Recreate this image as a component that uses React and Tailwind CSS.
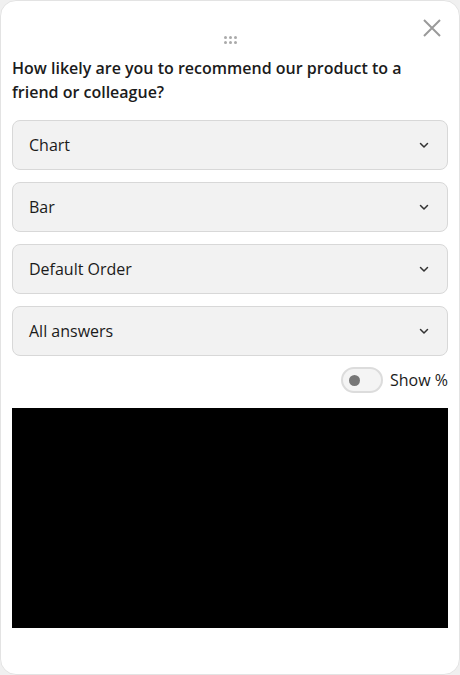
import React, { useState } from 'react';

const options = ['Chart', 'Bar', 'Default Order', 'All answers'];

const Chevron = () => (
  <svg width="12" height="12" viewBox="0 0 12 12" fill="none">
    <path d="M2.5 4.5 6 8l3.5-3.5" stroke="#333" strokeWidth="1.5" strokeLinecap="round" strokeLinejoin="round" />
  </svg>
);

const App = () => {
  const [showPct, setShowPct] = useState(false);

  return (
    <div className="h-[675px] w-[460px] bg-[#f0f0f0]" style={{ fontFamily: '"Open Sans", "Noto Sans", sans-serif' }}>
      <div className="h-full rounded-2xl border border-[#e3e3e3] bg-white px-[11px] relative">
        <button className="absolute right-[15px] top-[15px] p-0.5" title="Close">
          <svg width="20" height="20" viewBox="0 0 20 20">
            <path d="M2 2l16 16M18 2 2 18" stroke="#9a9a9a" strokeWidth="2" />
          </svg>
        </button>

        <div className="flex justify-center pt-[35px]">
          <div className="grid grid-cols-3 gap-[2px]">
            {[0, 1, 2, 3, 4, 5].map(i => (
              <span key={i} className="h-[3px] w-[3px] rounded-full bg-[#aaa]" />
            ))}
          </div>
        </div>

        <h2 className="mt-[12px] text-[16px] font-semibold leading-6 text-[#1b1b1b]">
          How likely are you to recommend our product to a friend or colleague?
        </h2>

        <div className="mt-[16px] flex flex-col gap-3">
          {options.map(opt => (
            <div
              key={opt}
              className="flex h-[50px] items-center justify-between rounded-lg border border-[#d8d8d8] bg-[#f2f2f2] pl-4 pr-[17px]"
            >
              <span className="text-[16px] text-[#1b1b1b]">{opt}</span>
              <Chevron />
            </div>
          ))}
        </div>

        <div className="mt-[11px] flex items-center justify-end gap-[7px]">
          <button
            onClick={() => setShowPct(!showPct)}
            className="flex h-[26px] w-[42px] items-center rounded-full border-2 border-[#dcdcdc] bg-[#f4f4f4] px-[6px]"
          >
            <span className={`h-[11px] w-[11px] rounded-full bg-[#777] ${showPct ? 'ml-auto' : ''}`} />
          </button>
          <span className="text-[16px] text-[#1b1b1b]">Show %</span>
        </div>

        <div className="mt-[15px] h-[220px] bg-black" />
      </div>
    </div>
  );
};

export default App;
